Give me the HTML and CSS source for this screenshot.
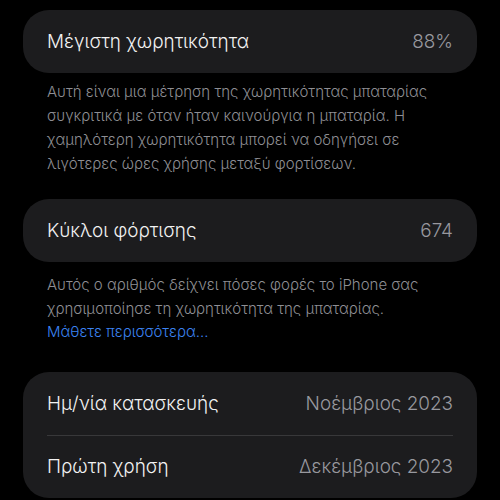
FILE: index.html
```html
<!DOCTYPE html>
<html lang="el">
<head>
  <meta charset="UTF-8" />
  <meta name="viewport" content="width=device-width, initial-scale=1.0"/>
  <title>Μπαταρία</title>
  <link rel="stylesheet" href="styles.css">
</head>
<body>
  <div class="page">
    <!-- Μέγιστη χωρητικότητα -->
    <section class="group">
      <div class="card">
        <div class="row">
          <span class="label">Μέγιστη χωρητικότητα</span>
          <span class="value">88%</span>
        </div>
      </div>
      <p class="footer">Αυτή είναι μια μέτρηση της χωρητικότητας μπαταρίας συγκριτικά με όταν ήταν καινούργια η μπαταρία. Η χαμηλότερη χωρητικότητα μπορεί να οδηγήσει σε λιγότερες ώρες χρήσης μεταξύ φορτίσεων.</p>
    </section>

    <!-- Κύκλοι φόρτισης -->
    <section class="group">
      <div class="card">
        <div class="row">
          <span class="label">Κύκλοι φόρτισης</span>
          <span class="value">674</span>
        </div>
      </div>
      <p class="footer footer-more">Αυτός ο αριθμός δείχνει πόσες φορές το iPhone σας χρησιμοποίησε τη χωρητικότητα της μπαταρίας.<br><a href="#" class="link">Μάθετε περισσότερα...</a></p>
    </section>

    <!-- Ημερομηνίες -->
    <section class="group">
      <div class="card">
        <div class="row">
          <span class="label">Ημ/νία κατασκευής</span>
          <span class="value">Νοέμβριος 2023</span>
        </div>
        <div class="row">
          <span class="label">Πρώτη χρήση</span>
          <span class="value">Δεκέμβριος 2023</span>
        </div>
      </div>
    </section>
  </div>
</body>
</html>
```

FILE: styles.css
```css
body {
  margin: 0;
  background-color: #000000;
  color: #ffffff;
  font-family: Inter, "Noto Sans", sans-serif;
  font-weight: 350;
}

.page {
  display: flex;
  flex-direction: column;
  gap: 23px;
  padding: 10px 23px 0;
}

.card {
  background-color: #1c1c1e;
  border-radius: 26px;
  padding: 0 24px;
}

.row {
  display: flex;
  justify-content: space-between;
  align-items: center;
  height: 63px;
  font-size: 18.9px;
}

/* separator between rows */
.row + .row {
  border-top: 1px solid #38383a;
  height: 62px;
}

.label {
  color: #f2f2f2;
}

.value {
  color: #98989e;
}

.footer {
  margin: 7px 0 0;
  padding: 0 24px;
  font-size: 15px;
  line-height: 24px;
  color: #8e8e93;
}

.footer-more {
  margin-top: 11px;
  padding-bottom: 5px;
  line-height: 23.5px;
}

.link {
  color: #3b82f0;
  text-decoration: none;
}
```
